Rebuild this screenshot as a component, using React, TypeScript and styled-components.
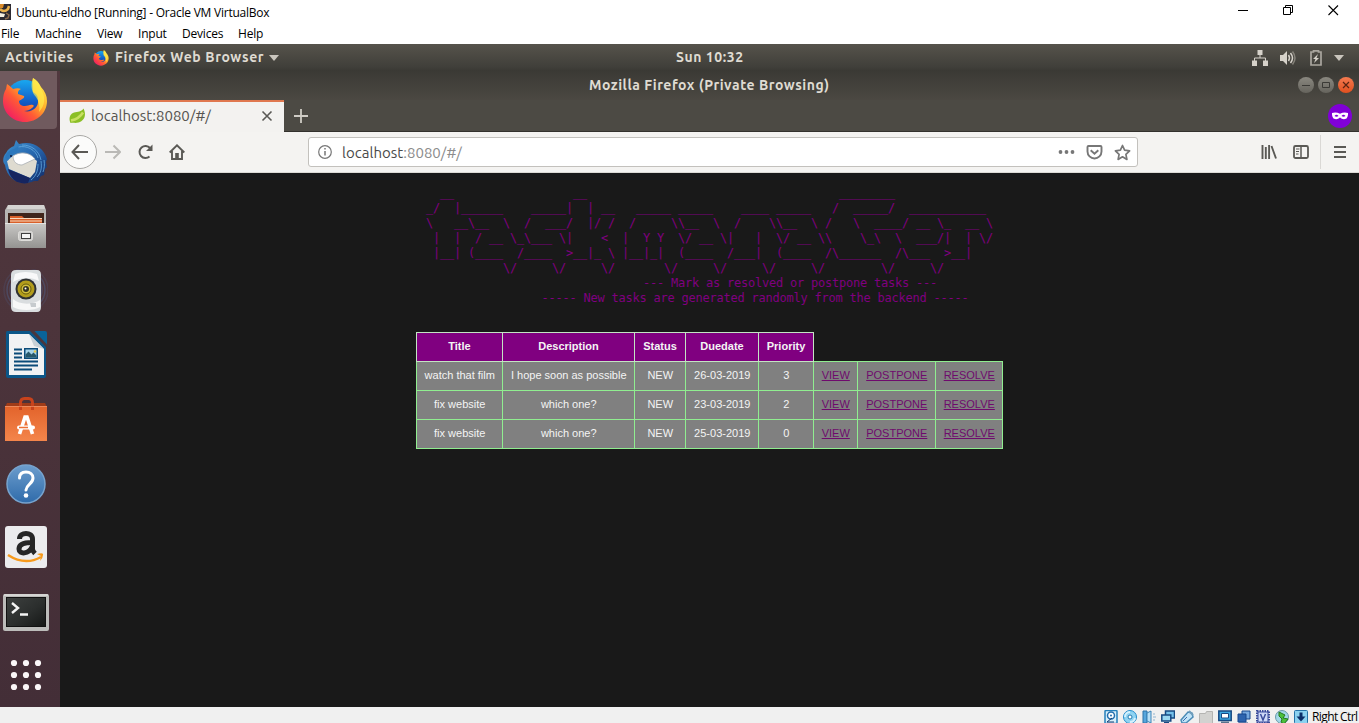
import React from 'react';
import styled, { createGlobalStyle } from 'styled-components';

const GlobalStyle = createGlobalStyle`
  * { box-sizing: border-box; }
  body { margin: 0; background: #fff; overflow: hidden; }
  svg { display: block; flex: none; }
`;

const ubuntu = `'Ubuntu', 'Noto Sans', 'Open Sans', sans-serif`;

const Screen = styled.div`
  width: 1359px;
  height: 723px;
  display: flex;
  flex-direction: column;
  overflow: hidden;
  background: #fff;
`;

/* Host window */
const HostTitle = styled.div`
  height: 24px;
  display: flex;
  align-items: center;
  font: 12px 'Open Sans', sans-serif;
  color: #000;
`;
const HostName = styled.span`
  margin-left: 5px;
  letter-spacing: -0.23px;
  white-space: nowrap;
`;
const HostControls = styled.div`
  margin-left: auto;
  display: flex;
  gap: 34px;
  padding: 0 20px 3px 0;
`;
const HostMenu = styled.div`
  height: 20px;
  display: flex;
  font: 12px/20px 'Open Sans', sans-serif;
  color: #000;
  padding-left: 1px;
`;
const MenuItem = styled.span<{ $w: number; $ls?: number }>`
  width: ${p => p.$w}px;
  letter-spacing: ${p => p.$ls ?? -0.2}px;
  flex: none;
`;

/* Guest desktop */
const TopPanel = styled.div`
  height: 27px;
  display: grid;
  grid-template-columns: 671px 68px 1fr;
  align-items: center;
  background: linear-gradient(#56534b, #403f3a 85%, #3a3934);
  color: #dfdbd2;
  font: 600 14px/27px ${ubuntu};
  padding: 0 15px 0 5px;
`;
const PanelGroup = styled.div<{ $end?: boolean }>`
  display: flex;
  align-items: center;
  justify-content: ${p => (p.$end ? 'flex-end' : 'flex-start')};
`;
const PanelText = styled.span<{ $w: number; $ls: number }>`
  width: ${p => p.$w}px;
  letter-spacing: ${p => p.$ls}px;
  white-space: nowrap;
`;
const Desktop = styled.div`
  height: 636px;
  display: flex;
`;
const Dock = styled.div`
  width: 60px;
  display: flex;
  flex-direction: column;
  background: linear-gradient(#50383e, #4c343b 40%, #432e37);
`;
const DockItem = styled.div<{ $active?: boolean; $drop?: number }>`
  width: ${p => (p.$active ? 57 : 60)}px;
  height: ${p => (p.$active ? 58 : 64)}px;
  margin-bottom: ${p => (p.$active ? 2 : 0)}px;
  padding: ${p => p.$drop ?? 0}px 0 0 2px;
  display: flex;
  align-items: center;
  background: ${p => (p.$active ? '#705a5e' : 'transparent')};
  border-radius: 0 0 4px 0;
`;

/* Browser */
const Browser = styled.div`
  width: 1299px;
  display: flex;
  flex-direction: column;
`;
const TitleBar = styled.div`
  height: 29px;
  display: flex;
  align-items: center;
  background: linear-gradient(#3b3a35, #4b4842);
  color: #dfdbd2;
  font: 600 14px/28px ${ubuntu};
`;
const WindowTitle = styled.span`
  margin: 0 0 2px 529px;
  width: 300px;
  letter-spacing: 0.53px;
  white-space: nowrap;
`;
const WindowButtons = styled.div`
  margin-left: auto;
  display: flex;
  gap: 4px;
  padding: 0 5px 1px 0;
`;
const WindowButton = styled.span<{ $close?: boolean }>`
  width: 16px;
  height: 16px;
  border-radius: 50%;
  display: grid;
  place-items: center;
  background: ${p => (p.$close ? 'linear-gradient(#f47a50, #e1501f)' : 'linear-gradient(#8a8880, #66645d)')};
`;
const TabStrip = styled.div`
  height: 32px;
  display: flex;
  background: #4c4a44;
  border-bottom: 1px solid #33312d;
`;
const Tab = styled.div`
  width: 224px;
  height: 32px;
  display: flex;
  align-items: center;
  padding: 0 11px 2px 9px;
  background: #f3f2f0;
  border-top: 2px solid #e0784f;
  color: #55534f;
  font: 15px/29px ${ubuntu};
`;
const TabLabel = styled.span`
  margin: 0 auto 1px 5px;
  letter-spacing: 0.02px;
`;
const NewTab = styled.div`
  width: 34px;
  display: grid;
  place-items: center;
`;
const PrivateBadge = styled.div`
  margin: 4px 7px 0 auto;
  width: 24px;
  height: 24px;
  border-radius: 50%;
  background: #8000d7;
  display: grid;
  place-items: center;
`;
const NavBar = styled.div`
  height: 41px;
  display: flex;
  align-items: center;
  background: #f4f3f1;
  border-bottom: 1px solid #dcdad6;
  padding-left: 3px;
`;
const BackButton = styled.div`
  width: 34px;
  height: 34px;
  border: 1px solid #a9a8a5;
  border-radius: 50%;
  background: #fbfbfa;
  display: grid;
  place-items: center;
`;
const NavIcons = styled.div`
  display: flex;
  gap: 16px;
  margin-left: 8px;
  width: 203px;
`;
const UrlBar = styled.div`
  width: 830px;
  height: 30px;
  display: flex;
  align-items: center;
  background: #fff;
  border: 1px solid #c3c1bd;
  border-radius: 3px;
  padding: 0 6px 0 8px;
`;
const Url = styled.span`
  margin: 1px auto 0 9px;
  font: 15px/28px ${ubuntu};
  letter-spacing: 0.02px;
  color: #4a4a4a;
`;
const UrlPath = styled.span`
  color: #8c8c8c;
`;
const UrlActions = styled.div`
  display: flex;
  gap: 11px;
  align-items: center;
`;
const ToolIcons = styled.div`
  margin-left: auto;
  display: flex;
  gap: 16px;
  padding-right: 11px;
`;
const Separator = styled.span`
  width: 1px;
  height: 34px;
  background: #dad8d5;
  margin-right: 11px;
`;

/* Page */
const Page = styled.main`
  height: 534px;
  background: #191919;
  display: flex;
  flex-direction: column;
  align-items: center;
`;
const Banner = styled.pre`
  margin: 12px 0 0;
  width: 100%;
  padding-top: 1px;
  text-align: center;
  color: #800080;
  font: 12px/15px 'DejaVu Sans Mono', monospace;
  letter-spacing: -0.2245px;
  font-variant-ligatures: none;
  height: 147px;
`;
const TaskTable = styled.table`
  border-collapse: collapse;
  table-layout: fixed;
  width: 587px;
  font: 11px/13px 'Liberation Sans', Arial, sans-serif;
  color: #f4f4f4;
`;
const HeadCell = styled.th<{ $w: number }>`
  width: ${p => p.$w}px;
  height: 29px;
  padding: 0 0 2px;
  background: #800080;
  border: 1px solid #c4e4c4;
  white-space: nowrap;
`;
const EmptyHead = styled.th<{ $w: number }>`
  width: ${p => p.$w}px;
  padding: 0;
`;
const Cell = styled.td`
  height: 29px;
  padding: 0 0 2px 0.5px;
  text-align: center;
  background: #808080;
  border: 1px solid #90ee90;
  white-space: nowrap;
`;
const TaskLink = styled.a`
  color: #6f0a6d;
  text-decoration: underline;
`;

/* Host status bar */
const StatusBar = styled.div`
  height: 16px;
  display: flex;
  justify-content: flex-end;
  align-items: flex-start;
  gap: 5px;
  padding: 3px 1px 0 0;
  overflow: hidden;
  background: #f0f0f0;
  font: 12px/12px 'Open Sans', sans-serif;
  color: #000;
`;
const HostKey = styled.span`
  width: 46px;
  margin: 1px 0 0 -1px;
  letter-spacing: -0.6px;
  white-space: nowrap;
`;

const FirefoxLogo = ({ size, id }: { size: number; id: string }) => (
  <svg width={size} height={size} viewBox="0 0 46 46">
    <defs>
      <linearGradient id={id + 'a'} x1="0.85" y1="0.1" x2="0.15" y2="0.85">
        <stop offset="0" stopColor="#ffe64a" />
        <stop offset=".35" stopColor="#ffb02a" />
        <stop offset=".65" stopColor="#ff5b35" />
        <stop offset="1" stopColor="#f3245e" />
      </linearGradient>
      <linearGradient id={id + 'b'} x1="0" y1="0" x2="0" y2="1">
        <stop offset="0" stopColor="#19a8f0" />
        <stop offset=".6" stopColor="#1259c4" />
        <stop offset="1" stopColor="#2b2c88" />
      </linearGradient>
    </defs>
    <circle cx="23" cy="22" r="19" fill={`url(#${id}b)`} />
    <path d="M4 12l1-5c3 2 5 4 6 5 3-1 6-1 8 0-3 1-3 3-3 5l6 2c1 2-2 3-5 5 0 3 2 5 6 5 3 0 5-2 8-1 1 0 1 2-1 3-2 2-5 3-8 3 7 2 15-3 14-11 0-5-3-7-5-8 0-5-1-9 0-14 4 2 6 5 8 9 4 4 6 9 6 14C45 36 35 45 23 45S1 36 1 24c0-5 1-9 3-12z" fill={`url(#${id}a)`} />
    <path d="M31 1c4 3 7 6 8 11 5 8 4 17-2 23 1-6 0-11-3-15-4-4-6-11-3-19z" fill="#fff04d" opacity=".65" />
  </svg>
);

const ThunderbirdLogo = () => (
  <svg width="46" height="46" viewBox="0 0 46 46">
    <defs>
      <linearGradient id="tbBlue" x1="0" y1="0" x2="1" y2="1">
        <stop offset="0" stopColor="#3f93cf" />
        <stop offset=".5" stopColor="#2666ae" />
        <stop offset="1" stopColor="#10245f" />
      </linearGradient>
    </defs>
    <path d="M14 0l3 4c14-4 25 4 28 15l-1 3 1 5-2 2-1 6-3 1-3 5-4 0c-12 6-27-1-29-16-3-3-2-9 1-12C6 9 9 7 12 6z" fill="url(#tbBlue)" />
    <path d="M5 21L12 15l14-1 9 7-2 11-5 6-21-9z" fill="#dedbd0" />
    <path d="M11 16c0 6 4 9 9 9l13-6c-5-7-15-8-22-3z" fill="#fff" stroke="#a9aeb4" strokeWidth=".8" />
    <path d="M6 29l22 9-2 5c-10 2-18-4-20-14z" fill="#162560" />
    <path d="M16 7c9-2 18 3 20 11M20 5c10 0 17 6 19 15M36 24c0 7-2 12-7 16M39 21c1 7 0 12-4 16M42 20c1 5 0 9-1 12" stroke="#65aade" strokeWidth="1" fill="none" opacity=".8" />
    <path d="M3 18c1-5 4-8 9-9l5-3-2 6c-5 0-8 4-9 9z" fill="#2c78bd" />
    <circle cx="9" cy="16" r="1" fill="#0a1840" />
  </svg>
);

const FilesLogo = () => (
  <svg width="46" height="46" viewBox="0 0 46 46">
    <defs>
      <linearGradient id="filesG" x1="0" y1="0" x2="0" y2="1">
        <stop offset="0" stopColor="#c9c8c6" />
        <stop offset="1" stopColor="#949391" />
      </linearGradient>
    </defs>
    <path d="M6 1h36l2 5v38H3V6z" fill="#b6b5b3" />
    <path d="M6 1h36l1 4H5z" fill="#d4d3d1" />
    <path d="M6 9h36v13H6z" fill="#40251b" />
    <path d="M8 12h12l2 2h18v6H8z" fill="#d9602a" />
    <path d="M8 14.500h32M8 17h32" stroke="#f7d9bd" strokeWidth="1" />
    <path d="M3 19h41v25H3z" fill="url(#filesG)" />
    <path d="M3 19.500h41" stroke="#e5e4e2" />
    <rect x="16.500" y="27.500" width="14" height="9" rx="2" fill="#cfcecc" stroke="#deddda" />
    <rect x="19.500" y="29.500" width="9" height="5" fill="#f5f5f5" stroke="#3f3f3f" />
  </svg>
);

const RhythmboxLogo = () => (
  <svg width="46" height="46" viewBox="0 0 46 46">
    <g fill="none" stroke="#50628c" strokeWidth="1.500" opacity=".45">
      <circle cx="24" cy="21" r="16" /><circle cx="24" cy="21" r="19" /><circle cx="24" cy="21" r="22" opacity=".5" />
    </g>
    <path d="M14 1h21q4 0 4 5v32q0 5-4 5H14q-5 0-5-5V6q0-5 5-5z" fill="#d9dddf" />
    <path d="M13 5q10-4 22 0l2 7c-8-4-18-4-26 1z" fill="#fff" opacity=".8" />
    <path d="M11 30c6 6 20 6 27 1v7c-6 4-21 4-27 0z" fill="#f7f8f8" />
    <circle cx="24" cy="20" r="10.500" fill="#2f3133" />
    <circle cx="24" cy="20" r="8.500" fill="#b29c1b" />
    <circle cx="24" cy="20" r="5" fill="#d3c13c" stroke="#66590d" />
    <circle cx="24" cy="20" r="3" fill="#353321" />
    <circle cx="23.500" cy="19.500" r="1" fill="#fff" />
    <path d="M28 34h6v4h-5z" fill="#c6cbce" />
  </svg>
);

const WriterLogo = () => (
  <svg width="46" height="50" viewBox="0 0 46 50">
    <path d="M5 1h23l16 16v29q0 2-2 2H6q-2 0-2-2V3q0-2 1-2z" fill="#0b5688" />
    <path d="M31 1h12q2 0 2 2v13z" fill="#0a6399" />
    <path d="M31 1l14 15" stroke="#4a373e" strokeWidth="2" />
    <path d="M7 4h20l15 15v26H7z" fill="#f1f2f3" />
    <path d="M27 4l15 15-10-3z" fill="#c7d0d6" />
    <path d="M12 19.500h8M12 23.500h8M12 27.500h8M12 31.500h24M12 35.500h24M12 39.500h18" stroke="#0b4b79" strokeWidth="1.800" />
    <rect x="22" y="18" width="14" height="11" fill="#0b4b79" />
    <rect x="23.500" y="19.500" width="11" height="8" fill="#a6d3e8" />
    <path d="M23.500 27.500v-3l3-3 3 3 2-2 3 3v2z" fill="#27586a" />
    <circle cx="33" cy="21.500" r="1.200" fill="#e5c94b" />
  </svg>
);

const SoftwareLogo = () => (
  <svg width="46" height="46" viewBox="0 0 46 46">
    <defs>
      <linearGradient id="softG" x1="0" y1="0" x2="0" y2="1">
        <stop offset="0" stopColor="#e2632b" /><stop offset="1" stopColor="#f4854b" />
      </linearGradient>
    </defs>
    <path d="M5 6h38l2 4H3z" fill="#9f3b18" />
    <path d="M3 9h42v35H3z" fill="url(#softG)" />
    <path d="M18.500 13V6q0-4.500 4-4.500h4q4 0 4 4.500v7" stroke="#c8431c" strokeWidth="3" fill="none" />
    <path d="M3 9.500h42" stroke="#f3a27d" opacity=".6" />
    <path d="M17.500 37l5.500-17h2l5.500 17" stroke="#fff" strokeWidth="3.600" fill="none" />
    <rect x="15" y="28.500" width="18" height="4" rx="2" fill="#fff" />
    <path d="M17 30.500h9" stroke="#ee7136" strokeWidth="1.500" />
  </svg>
);

const HelpLogo = () => (
  <svg width="46" height="46" viewBox="0 0 46 46">
    <defs>
      <linearGradient id="helpG" x1="0" y1="0" x2="0" y2="1">
        <stop offset="0" stopColor="#6c9dcd" /><stop offset="1" stopColor="#2f6baa" />
      </linearGradient>
    </defs>
    <circle cx="24" cy="23" r="19" fill="url(#helpG)" stroke="#77a4cf" strokeWidth="1.500" />
    <path d="M17.500 17c0-4 2-6 6.500-6 4 0 7 2.300 7 6 0 6-6.500 6-7 12" fill="none" stroke="#fff" strokeWidth="3" strokeLinecap="round" />
    <circle cx="24" cy="34.500" r="2.300" fill="#fff" />
  </svg>
);

const AmazonLogo = () => (
  <svg width="46" height="46" viewBox="0 0 46 46">
    <rect x="3" y="2" width="42" height="42" rx="3" fill="#ececee" />
    <path d="M17.500 15c0-7.500 13-7.500 13 0V25q0 2 2.500 4.500M30 18.500c-8 0-13 1.500-13 6.500 0 6 10 5 13-2" fill="none" stroke="#262626" strokeWidth="5" />
    <path d="M6 31q17 11 33 2" fill="none" stroke="#f79a1c" strokeWidth="2.400" />
    <path d="M35 30q7-2 6 1 0 3-3 6 1-4 1-5z" fill="#f79a1c" />
  </svg>
);

const TerminalLogo = () => (
  <svg width="48" height="40" viewBox="0 0 48 40">
    <defs>
      <linearGradient id="termG" x1="0" y1="0" x2="1" y2="1">
        <stop offset="0" stopColor="#3d403f" /><stop offset=".55" stopColor="#2b2e2d" /><stop offset="1" stopColor="#151716" />
      </linearGradient>
    </defs>
    <rect x="1" y="2" width="46" height="37" rx="2" fill="#bcbcba" />
    <path d="M2 3h44" stroke="#ededeb" />
    <rect x="4.500" y="5.500" width="39" height="29" fill="url(#termG)" stroke="#111" />
    <path d="M10 11l6 5-6 5M18 22.500h8" fill="none" stroke="#f5f5f5" strokeWidth="2.400" />
  </svg>
);

const AppsGrid = () => (
  <svg width="46" height="36" viewBox="0 0 46 36" fill="#fbf8f9">
    {[6, 18, 30].map(y => [12, 24, 36].map(x => <circle key={`${x}-${y}`} cx={x} cy={y} r="3.100" />))}
  </svg>
);

const Caret = () => (
  <svg width="10" height="6" viewBox="0 0 10 6"><path d="M0 0h10L5 6z" fill="#c9c5bd" /></svg>
);

const stroke = { fill: 'none', stroke: '#5a5955', strokeWidth: 2 } as const;

const statusFrames: React.ReactNode[] = [
  <><rect x="1" y=".5" width="12" height="13" rx="1" fill="#d8effa" stroke="#2680bb" strokeWidth="1.500" /><circle cx="7" cy="5.500" r="3.500" fill="#fff" stroke="#246fae" strokeWidth="1.500" /><circle cx="7" cy="5.500" r="1" fill="#246fae" /><path d="M8 8l-5 4h7" stroke="#143c72" fill="none" /></>,
  <><circle cx="7" cy="7" r="6.500" fill="#8fd3f2" stroke="#268dcc" /><path d="M2 7a5 5 0 0 1 5-5M12 8a5 5 0 0 1-5 4" stroke="#d5f1fd" strokeWidth="2" fill="none" /><circle cx="7" cy="7" r="2" fill="#fff" stroke="#247bb0" /></>,
  <><path d="M1 1h4v12H1z" fill="#57a6dc" stroke="#2c72a8" /><path d="M5 3l4-2v12l-4-2z" fill="#b8e0f7" stroke="#3b83b7" /><path d="M11 4h2M11 7h3M11 10h2" stroke="#8fb4d0" /></>,
  <><path d="M4.500 1h9v7h-9z" fill="#75c1ea" stroke="#174a83" strokeWidth="1.500" /><path d="M.8 5h9v6h-9z" fill="#9ad7f2" stroke="#174a83" strokeWidth="1.500" /><path d="M3 13h5" stroke="#174a83" strokeWidth="2" /></>,
  <><path d="M1 10l7-8 4 1 1 4-7 6H2z" fill="#c1e4f8" stroke="#4b8bb6" strokeWidth="1.500" /><path d="M9 1l4 4" stroke="#6f9dbb" strokeWidth="2" /><path d="M3 11l4-4" stroke="#3e6fb0" /></>,
  <path d="M.5 3.500h6l1-2h6v12H.5z" fill="#d2d2d0" stroke="#b4b4b2" />,
  <><rect x=".8" y="1" width="12.400" height="9.500" fill="#3ba6e0" stroke="#174a83" strokeWidth="1.500" /><path d="M3.500 3.500h7v4.500h-7z" fill="#fff" stroke="#174a83" /><path d="M3 12.500h8" stroke="#59718c" strokeWidth="2" /></>,
  <><path d="M5 1h8v8H5z" fill="#76a8df" stroke="#16468c" /><path d="M1 4h8v8H1z" fill="#2d63ae" stroke="#16468c" /><path d="M2 13h9" stroke="#274f8f" /></>,
  <><rect x="1" y="1" width="12" height="12" fill="#d9e2fb" stroke="#3c4d9b" strokeDasharray="1.500 1" strokeWidth="2" /><rect x="2" y="2" width="10" height="10" fill="#cfdaf8" stroke="#3c4d9b" /><path d="M4.500 4L7 10l2.500-6" fill="none" stroke="#3c4d9b" strokeWidth="1.500" /></>,
  <><circle cx="7" cy="7" r="6.500" fill="#a3d8e8" stroke="#6a99a8" /><path d="M4 2l6 3-2 3 5 1-4 5-3-2 1-3-3-3z" fill="#4cc03c" stroke="#26791f" /></>,
  <><rect x=".5" y=".5" width="13" height="13" rx="1" fill="#8cd2f0" stroke="#2773a8" /><path d="M7 2.500v5" stroke="#0c2f68" strokeWidth="3" /><path d="M2.500 6.500h9L7 11.500z" fill="#0c2f68" /></>,
];

const artRows = String.raw`
  __                 __                                    ________
_/  |______    _____|  | __   _____ _____    ____ _____   /  _____/  ___________
\   __\__  \  /  ___/  |/ /  /     \\__  \  /    \\__  \ /   \  ____/ __ \_  __ \
 |  |  / __ \_\___ \|    <  |  Y Y  \/ __ \|   |  \/ __ \\    \_\  \  ___/|  | \/
 |__| (____  /____  >__|_ \ |__|_|  (____  /___|  (____  /\______  /\___  >__|
           \/     \/     \/       \/     \/     \/     \/        \/     \/`
  .split('\n')
  .slice(1)
  .map(row => row.padEnd(81));

const captionRows = [
  ' '.repeat(23) + '--- Mark as resolved or postpone tasks ---',
  ' '.repeat(13) + '----- New tasks are generated randomly from the backend -----',
];

const banner = [...artRows, ...captionRows].join('\n');

const columns = [
  { label: 'Title', width: 86 },
  { label: 'Description', width: 132 },
  { label: 'Status', width: 51 },
  { label: 'Duedate', width: 73 },
  { label: 'Priority', width: 55 },
];
const actions = [
  { label: 'VIEW', width: 44 },
  { label: 'POSTPONE', width: 78 },
  { label: 'RESOLVE', width: 67 },
];
const tasks = [
  ['watch that film', 'I hope soon as possible', 'NEW', '26-03-2019', '3'],
  ['fix website', 'which one?', 'NEW', '23-03-2019', '2'],
  ['fix website', 'which one?', 'NEW', '25-03-2019', '0'],
];

export default function App() {
  return (
    <Screen>
      <GlobalStyle />
      <HostTitle>
        <svg width="11" height="16" viewBox="0 0 11 16">
          <path d="M0 0h11v16H0z" fill="#2c2a32" />
          <path d="M0 5q4 4 8 0l1-3" stroke="#e9b04b" strokeWidth="2.500" fill="none" />
          <path d="M0 0h4l-1 4H0z" fill="#d98a2a" />
          <path d="M0 9l5 1-1 3H0z" fill="#f4eee0" />
          <path d="M6 9l3 2-1 3-3 1" stroke="#8b6a4c" strokeWidth="1.500" fill="none" />
        </svg>
        <HostName>Ubuntu-eldho [Running] - Oracle VM VirtualBox</HostName>
        <HostControls>
          <svg width="11" height="11"><path d="M0 5.500h10" stroke="#000" /></svg>
          <svg width="11" height="11"><path d="M.5 2.500h7v7h-7zM2.500 2.500V.5h7v7H7.500" fill="none" stroke="#000" /></svg>
          <svg width="11" height="11"><path d="M.5.5l9.500 9.500M10 .5L.5 10" stroke="#000" strokeWidth="1.100" /></svg>
        </HostControls>
      </HostTitle>
      <HostMenu>
        <MenuItem $w={34}>File</MenuItem>
        <MenuItem $w={62}>Machine</MenuItem>
        <MenuItem $w={41}>View</MenuItem>
        <MenuItem $w={44}>Input</MenuItem>
        <MenuItem $w={56}>Devices</MenuItem>
        <MenuItem $w={40}>Help</MenuItem>
      </HostMenu>

      <TopPanel>
        <PanelGroup>
          <PanelText $w={88} $ls={0.65}>Activities</PanelText>
          <FirefoxLogo size={16} id="ffs" />
          <PanelText $w={154} $ls={0.62} style={{ marginLeft: 6 }}>Firefox Web Browser</PanelText>
          <Caret />
        </PanelGroup>
        <PanelText $w={68} $ls={0.55}>Sun 10:32</PanelText>
        <PanelGroup $end>
          <svg width="16" height="16" viewBox="0 0 16 16"><path d="M5.500 0h5v5h-5zM0 10.500h5V16H0zM11 10.500h5V16h-5z" fill="#d6d2ca" /><path d="M8 5v3M2.500 11V8h11v3" fill="none" stroke="#d6d2ca" /></svg>
          <svg width="16" height="16" viewBox="0 0 16 16" style={{ marginLeft: 12 }}><path d="M0 5h3l4-4v14l-4-4H0z" fill="#d6d2ca" /><path d="M8.500 5q2 3 0 6M10.500 3q4 5 0 10" fill="none" stroke="#d6d2ca" strokeWidth="1.500" /><path d="M12.500 1.500q5 6.500 0 13" fill="none" stroke="#85827a" strokeWidth="1.500" /></svg>
          <svg width="12" height="16" viewBox="0 0 12 16" style={{ margin: '0 12px 0 14px' }}><path d="M3.500 2V.8h5V2H11v13H1V2z" fill="none" stroke="#aaa69f" strokeWidth="1.700" /><path d="M8 4L3 9h2.500L4 13l5-5H6.500z" fill="#d6d2ca" /></svg>
          <Caret />
        </PanelGroup>
      </TopPanel>

      <Desktop>
        <Dock>
          <DockItem $active><FirefoxLogo size={46} id="ffl" /></DockItem>
          <DockItem><ThunderbirdLogo /></DockItem>
          <DockItem><FilesLogo /></DockItem>
          <DockItem $drop={2}><RhythmboxLogo /></DockItem>
          <DockItem><WriterLogo /></DockItem>
          <DockItem $drop={1}><SoftwareLogo /></DockItem>
          <DockItem $drop={2}><HelpLogo /></DockItem>
          <DockItem><AmazonLogo /></DockItem>
          <DockItem $drop={2}><TerminalLogo /></DockItem>
          <DockItem><AppsGrid /></DockItem>
        </Dock>

        <Browser>
          <TitleBar>
            <WindowTitle>Mozilla Firefox (Private Browsing)</WindowTitle>
            <WindowButtons>
              <WindowButton><svg width="8" height="8"><path d="M0 4.500h8" stroke="#3b3a36" /></svg></WindowButton>
              <WindowButton><svg width="8" height="8"><path d="M.5 1.500h7v5h-7z" fill="none" stroke="#3b3a36" /></svg></WindowButton>
              <WindowButton $close><svg width="8" height="8"><path d="M1 1l6 6M7 1L1 7" stroke="#5a2412" strokeWidth="1.200" /></svg></WindowButton>
            </WindowButtons>
          </TitleBar>
          <TabStrip>
            <Tab>
              <svg width="17" height="16" viewBox="0 0 17 16"><path d="M14.500.5c3 6 1.500 12-5 14-3 .8-5 0-8 .5C-.5 11 .5 6 5 4.500 9 3.500 12 4 14.500.5z" fill="#8cbf26" /><path d="M2 12.500c5-1 9-3 12-8" stroke="#c8e062" strokeWidth="2.500" fill="none" /></svg>
              <TabLabel>localhost:8080/#/</TabLabel>
              <svg width="12" height="12" viewBox="0 0 12 12"><path d="M1.500 1.500l9 9M10.500 1.500l-9 9" stroke="#5a5955" strokeWidth="1.600" /></svg>
            </Tab>
            <NewTab><svg width="14" height="14"><path d="M7 0v14M0 7h14" stroke="#cfccc5" strokeWidth="1.800" /></svg></NewTab>
            <PrivateBadge>
              <svg width="16" height="8" viewBox="0 0 16 8"><path d="M0 1q4-1.500 8 .8Q12-.5 16 1q.3 3-1.500 5.500-3.500 2-6.500-1-3 3-6.500 1Q-.3 4 0 1z" fill="#fff" /><path d="M2.500 4q2-2.500 4 0-2 1.500-4 0zM9.500 4q2-2.500 4 0-2 1.500-4 0z" fill="#8000d7" /></svg>
            </PrivateBadge>
          </TabStrip>
          <NavBar>
            <BackButton><svg width="18" height="16" viewBox="0 0 18 16"><path d="M8 1L1.500 8 8 15M2 8h15" {...stroke} /></svg></BackButton>
            <NavIcons>
              <svg width="16" height="16" viewBox="0 0 16 16"><path d="M8.500 1.500L15 8l-6.500 6.500M0 8h15" {...stroke} stroke="#bab9b6" /></svg>
              <svg width="16" height="16" viewBox="0 0 16 16"><path d="M12.500 12.500a6 6 0 1 1 .5-8.500" {...stroke} /><path d="M9 7h6.500V.5z" fill="#5a5955" /></svg>
              <svg width="16" height="16" viewBox="0 0 16 16"><path d="M.7 8.500L8 1.300l7.300 7.200M3 7v8h10V7" {...stroke} strokeWidth="1.900" /><path d="M6.200 9h3.600v6H6.200z" fill="#5a5955" /></svg>
            </NavIcons>
            <UrlBar>
              <svg width="16" height="16" viewBox="0 0 16 16"><circle cx="8" cy="8" r="6.300" fill="none" stroke="#777" strokeWidth="1.200" /><path d="M8 7v4.500M8 4v1.600" stroke="#777" strokeWidth="1.500" /></svg>
              <Url>localhost<UrlPath>:8080/#/</UrlPath></Url>
              <UrlActions>
                <svg width="17" height="16" viewBox="0 0 17 16" fill="#777"><circle cx="2.500" cy="8" r="1.900" /><circle cx="8.500" cy="8" r="1.900" /><circle cx="14.500" cy="8" r="1.900" /></svg>
                <svg width="17" height="16" viewBox="0 0 17 16" fill="none" stroke="#777" strokeWidth="1.900"><path d="M2.500 2h12q1 0 1 1v4.500a7 7 0 0 1-14 0V3q0-1 1-1z" /><path d="M4.700 6.200l3.800 3.600 3.800-3.600" /></svg>
                <svg width="17" height="17" viewBox="0 0 17 17"><path d="M8.500 1.500l2.100 4.700 5 .6-3.700 3.500 1 5.100-4.400-2.600-4.400 2.600 1-5.100L1.400 6.800l5-.6z" fill="none" stroke="#777" strokeWidth="1.700" strokeLinejoin="round" /></svg>
              </UrlActions>
            </UrlBar>
            <ToolIcons>
              <svg width="16" height="16" viewBox="0 0 16 16"><path d="M1.500 1v14M4.800 3v12M8.100 1v14M10.500 2l4.500 12.500" {...stroke} strokeWidth="1.900" /></svg>
              <svg width="16" height="16" viewBox="0 0 16 16"><rect x="1" y="2" width="14" height="12" rx="1.500" {...stroke} strokeWidth="1.800" /><path d="M8 2v12" stroke="#5a5955" strokeWidth="1.500" /><path d="M3 5h3.500M3 7.500h3M3 10h2.500" stroke="#5a5955" /></svg>
            </ToolIcons>
            <Separator />
            <svg width="16" height="16" viewBox="0 0 16 16" style={{ marginRight: 11 }}><path d="M2 3h12M2 8h12M2 13h12" {...stroke} /></svg>
          </NavBar>

          <Page>
            <Banner>{banner}</Banner>
            <TaskTable>
              <thead>
                <tr>
                  {columns.map(c => <HeadCell key={c.label} $w={c.width}>{c.label}</HeadCell>)}
                  {actions.map(a => <EmptyHead key={a.label} $w={a.width} />)}
                </tr>
              </thead>
              <tbody>
                {tasks.map((task, i) => (
                  <tr key={i}>
                    {task.map((value, j) => <Cell key={j}>{value}</Cell>)}
                    {actions.map(a => <Cell key={a.label}><TaskLink href="#/">{a.label}</TaskLink></Cell>)}
                  </tr>
                ))}
              </tbody>
            </TaskTable>
          </Page>
        </Browser>
      </Desktop>

      <StatusBar>
        {statusFrames.map((icon, i) => <svg key={i} width="14" height="14" viewBox="0 0 14 14">{icon}</svg>)}
        <HostKey>Right Ctrl</HostKey>
      </StatusBar>
    </Screen>
  );
}
